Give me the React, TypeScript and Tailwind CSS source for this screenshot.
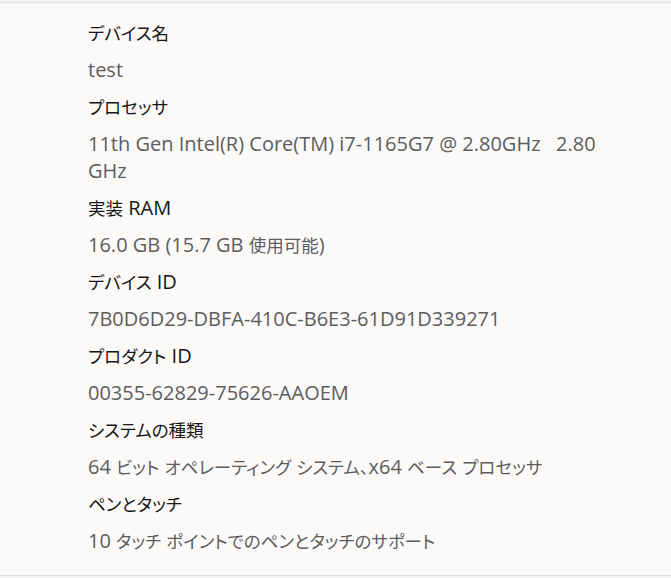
const specs: { label: string; value: string }[] = [
  { label: "デバイス名", value: "test" },
  { label: "プロセッサ", value: "11th Gen Intel(R) Core(TM) i7-1165G7 @ 2.80GHz\u00a0\u00a0 2.80 GHz" },
  { label: "実装 RAM", value: "16.0 GB (15.7 GB 使用可能)" },
  { label: "デバイス ID", value: "7B0D6D29-DBFA-410C-B6E3-61D91D339271" },
  { label: "プロダクト ID", value: "00355-62829-75626-AAOEM" },
  { label: "システムの種類", value: "64 ビット オペレーティング システム、x64 ベース プロセッサ" },
  { label: "ペンとタッチ", value: "10 タッチ ポイントでのペンとタッチのサポート" },
];

// Japanese runs are set a little smaller so they come out as narrow as the UI font in the shot
function Mixed({ text }: { text: string }) {
  const parts = text.split(/([\u3000-\u30ff\u4e00-\u9fff\uff00-\uffef]+)/);
  return (
    <>
      {parts.map((p, i) =>
        i % 2 === 1 ? (
          <span key={i} className="text-[17.5px] leading-[16px]">
            {p}
          </span>
        ) : (
          p
        )
      )}
    </>
  );
}

export default function App() {
  return (
    <div
      className="h-[578px] w-[671px] overflow-hidden bg-[#f3f3f3] pt-[2px] [font-feature-settings:'palt']"
      style={{ fontFamily: '"Open Sans", "Noto Sans CJK JP", sans-serif' }}
    >
      <div className="h-[574px] border-y border-[#e2e2e2] bg-[#fbfaf9] pl-[88px] pr-[40px] pt-[16px]">
        <dl className="flex flex-col">
          {specs.map((s) => (
            <div key={s.label} className="flex flex-col">
              <dt className="text-[20px] leading-[27px] text-[#161616]">
                <Mixed text={s.label} />
              </dt>
              <dd className="mt-[10px] mb-[10px] max-w-[530px] text-[20px] leading-[27px] text-[#5d5d5d]">
                <Mixed text={s.value} />
              </dd>
            </div>
          ))}
        </dl>
      </div>
    </div>
  );
}
